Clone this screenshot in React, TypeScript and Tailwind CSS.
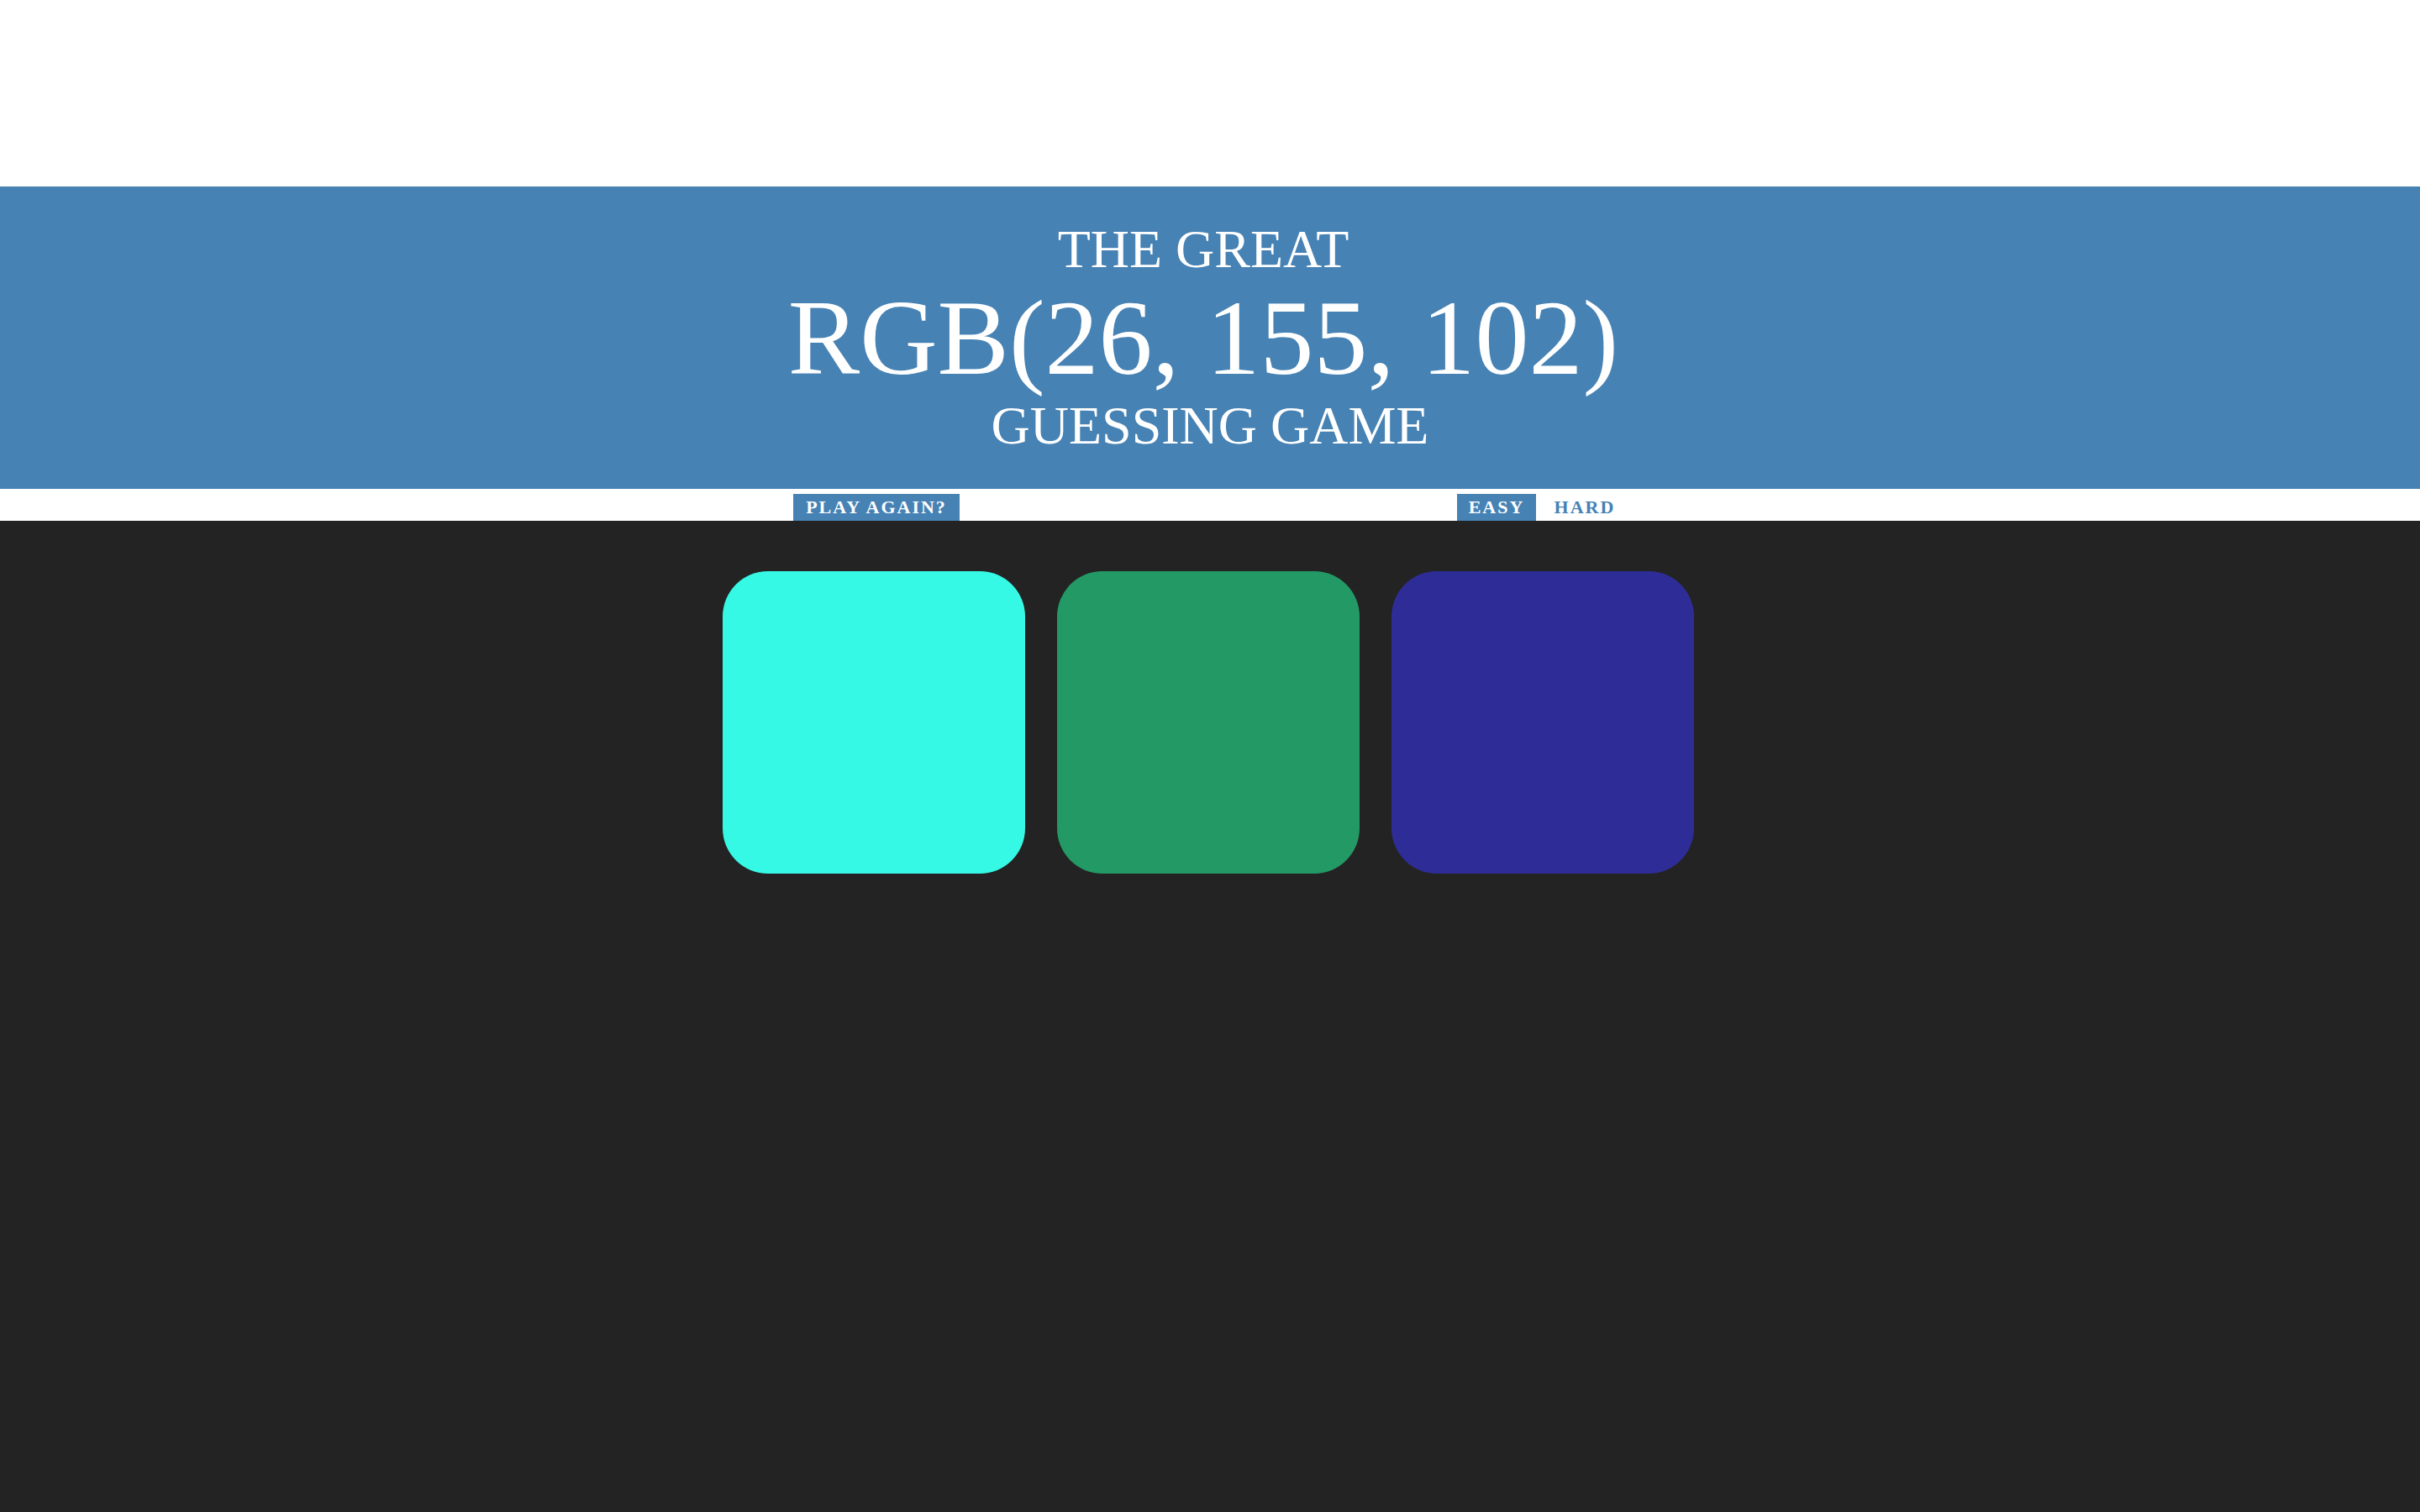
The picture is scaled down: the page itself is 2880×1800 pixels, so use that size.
import React from "react";

const squares = ["#36f9e5", "#239966", "#2e2d97"];

const App = () => {
  return (
    <div className="min-h-screen w-full flex flex-col bg-[#232323] font-['Liberation_Serif',serif]">
      <div className="bg-white pt-[222px]">
        <h1 className="bg-[#4682b4] text-white text-center uppercase font-normal py-[40px] m-0 text-[64px]">
          <div className="leading-[70px] pr-[16px]">The Great</div>
          <div className="text-[128px] leading-[140px] pr-[16px]">RGB(26, 155, 102)</div>
          <div className="leading-[70px]">Guessing Game</div>
        </h1>
      </div>
      <div className="bg-white h-[38px] flex justify-center gap-2 pt-[6px]">
        <button className="h-[32px] w-[198px] bg-[#4682b4] text-white text-[22px] font-bold tracking-[2px] leading-[28px] uppercase">
          Play Again?
        </button>
        <span className="w-[576px]"></span>
        <button className="h-[32px] w-[94px] bg-[#4682b4] text-white text-[22px] font-bold tracking-[2px] leading-[28px] uppercase">
          Easy
        </button>
        <button className="h-[32px] w-[100px] text-[#4682b4] text-[22px] font-bold tracking-[2px] leading-[28px] uppercase">
          Hard
        </button>
      </div>
      <div className="flex-1">
        <div className="w-[1160px] mx-auto mt-[60px] pr-[4px] flex gap-[38px]">
          {squares.map((c) => (
            <div
              key={c}
              className="w-[360px] h-[360px] shrink-0 rounded-[54px]"
              style={{ backgroundColor: c }}
            />
          ))}
        </div>
      </div>
    </div>
  );
};

export default App;
